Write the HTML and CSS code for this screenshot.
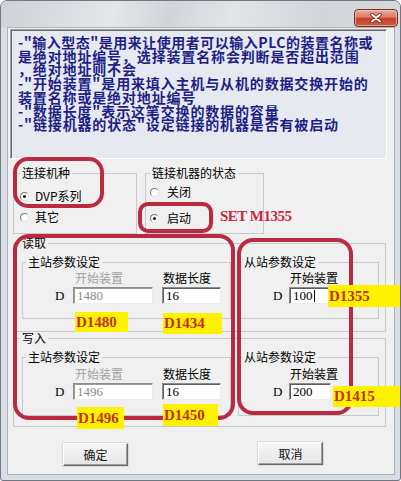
FILE: index.html
```html
<!DOCTYPE html>
<html lang="zh-CN">
<head>
<meta charset="utf-8">
<title>链接设定</title>
<link rel="stylesheet" href="styles.css">
</head>
<body>
<div class="window">
  <div class="titlebar">
    <div class="close">
      <svg width="12" height="10" viewBox="0 0 12 10"><path d="M2 1.5 L10 8.5 M10 1.5 L2 8.5" stroke="#5a1a12" stroke-width="3.4" stroke-linecap="round"/><path d="M2 1.5 L10 8.5 M10 1.5 L2 8.5" stroke="#fff" stroke-width="2" stroke-linecap="round"/></svg>
    </div>
  </div>
  <div class="client">
    <div class="notes">
      <div class="tight">-"输入型态"是用来让使用者可以输入PLC的装置名称或</div>
      <div>是绝对地址编号，选择装置名称会判断是否超出范围</div>
      <div>，绝对地址则不会</div>
      <div>-"开始装置"是用来填入主机与从机的数据交换开始的</div>
      <div>装置名称或是绝对地址编号</div>
      <div>-"数据长度"表示这笔交换的数据的容量</div>
      <div>-"链接机器的状态"设定链接的机器是否有被启动</div>
    </div>

    <div class="row-mid">
      <fieldset class="grp g-kind">
        <legend>连接机种</legend>
        <div class="radios">
          <div class="radio"><span class="rb on"></span><span>DVP系列</span></div>
          <div class="radio"><span class="rb"></span><span>其它</span></div>
        </div>
      </fieldset>
      <fieldset class="grp g-state">
        <legend>链接机器的状态</legend>
        <div class="radios">
          <div class="radio"><span class="rb"></span><span>关闭</span></div>
          <div class="radio"><span class="rb on"></span><span>启动</span></div>
        </div>
      </fieldset>
    </div>

    <fieldset class="grp g-io g-read">
      <legend>读取</legend>
      <div class="subs">
        <fieldset class="sub master">
          <legend>主站参数设定</legend>
          <div class="fields">
            <span class="dlabel">D</span>
            <div class="field f-start"><span class="flabel dis">开始装置</span><span class="input dis">1480</span></div>
            <div class="field f-len"><span class="flabel">数据长度</span><span class="input">16</span></div>
          </div>
        </fieldset>
        <fieldset class="sub slave">
          <legend>从站参数设定</legend>
          <div class="fields">
            <span class="dlabel">D</span>
            <div class="field f-slave"><span class="flabel">开始装置</span><span class="input">100<span class="caret"></span></span></div>
          </div>
        </fieldset>
      </div>
    </fieldset>

    <fieldset class="grp g-io g-write">
      <legend>写入</legend>
      <div class="subs">
        <fieldset class="sub master">
          <legend>主站参数设定</legend>
          <div class="fields">
            <span class="dlabel">D</span>
            <div class="field f-start"><span class="flabel dis">开始装置</span><span class="input dis">1496</span></div>
            <div class="field f-len"><span class="flabel">数据长度</span><span class="input">16</span></div>
          </div>
        </fieldset>
        <fieldset class="sub slave">
          <legend>从站参数设定</legend>
          <div class="fields">
            <span class="dlabel">D</span>
            <div class="field f-slave"><span class="flabel">开始装置</span><span class="input">200</span></div>
          </div>
        </fieldset>
      </div>
    </fieldset>

    <div class="buttons">
      <div class="btn ok">确定</div>
      <div class="btn cancel">取消</div>
    </div>
  </div>

  <!-- annotations drawn over the dialog -->
  <div class="mark m-kind"></div>
  <div class="mark m-on"></div>
  <div class="mark m-master"></div>
  <div class="mark m-slave"></div>
  <div class="set-note">SET M1355</div>
  <div class="tag t1">D1480</div>
  <div class="tag t2">D1434</div>
  <div class="tag t3">D1355</div>
  <div class="tag t4">D1496</div>
  <div class="tag t5">D1450</div>
  <div class="tag t6">D1415</div>
</div>
</body>
</html>
```

FILE: styles.css
```css
* { box-sizing: border-box; }
html, body { margin: 0; padding: 0; }
body {
  width: 401px;
  height: 481px;
  overflow: hidden;
  background: #ffffff;
  font-family: "Noto Sans CJK SC", "Liberation Sans", sans-serif;
  font-size: 12px;
  color: #000;
}

.window {
  position: relative;
  width: 401px;
  height: 481px;
  border: 1px solid #6f7883;
  border-radius: 7px 7px 3px 3px;
  background: #d9dee4;
  overflow: hidden;
}

.titlebar {
  height: 27px;
  display: flex;
  justify-content: flex-end;
  align-items: flex-start;
  background: linear-gradient(100deg, #cdd2d8 0%, #e4e6e9 28%, #d1d5da 42%, #e2e4e7 58%, #d2d6db 80%, #d6dade 100%);
}

.close {
  margin-top: 8px;
  margin-right: 2px;
  width: 44px;
  height: 18px;
  border: 1px solid #7b3026;
  border-radius: 4px;
  background: linear-gradient(#eaa898 0%, #dc7a65 45%, #c5432c 52%, #cc5a41 100%);
  box-shadow: inset 0 0 0 1px rgba(255, 220, 210, 0.55);
  display: flex;
  align-items: center;
  justify-content: center;
}
.close svg { display: block; }

.client {
  margin-left: 7px;
  width: 386px;
  height: 446px;
  background: #f0f0f0;
  box-shadow: 0 0 0 1px #a9b1bb;
  padding-top: 1px;
}

.notes {
  margin-left: 2px;
  width: 377px;
  height: 130px;
  border: 1px solid;
  border-color: #a0a0a0 #ffffff #ffffff #a0a0a0;
  box-shadow: inset 1px 1px 0 #6a6a6a;
  background: #e7e9f1;
  padding: 6px 0 0 7px;
  color: #1d1f86;
  font-size: 14px;
  font-weight: bold;
  line-height: 13.7px;
  letter-spacing: 0.85px;
  white-space: nowrap;
  overflow: hidden;
}
.notes .tight { letter-spacing: 0.5px; }

.row-mid {
  display: flex;
  gap: 8px;
  margin: 7px 0 0 5px;
}

fieldset { margin: 0; min-width: 0; }
legend {
  padding: 0 2px;
  font-size: 12px;
  line-height: 14px;
}

.grp {
  border: 1px solid #c6cacf;
}

.g-kind {
  width: 124px;
  height: 68px;
  padding: 9px 0 0 6px;
}
.g-state {
  width: 119px;
  height: 68px;
  padding: 5px 0 0 4px;
}
.radios { display: flex; flex-direction: column; }
.g-kind .radios { gap: 7px; }
.g-state .radios { gap: 12px; }
.radio {
  display: flex;
  align-items: center;
  height: 14px;
  line-height: 14px;
}
.g-kind .radio { gap: 6px; }
.g-state .radio { gap: 8px; }
.rb {
  width: 9px;
  height: 9px;
  border-radius: 50%;
  border: 1px solid;
  border-color: #7a7a7a #e4e4e4 #e4e4e4 #7a7a7a;
  background: #fbfbfb;
  display: flex;
  align-items: center;
  justify-content: center;
}
.rb.on::after {
  content: "";
  width: 3px;
  height: 3px;
  border-radius: 50%;
  background: #111;
}

.g-io {
  width: 373px;
  height: 96px;
  margin-left: 5px;
  padding: 5px 6px 0 8px;
}
.g-io > legend { margin-left: -2px; }
.g-read { margin-top: 2px; }
.g-write { margin-top: -1px; }

.subs { display: flex; gap: 7px; }

.sub {
  border: 1px solid #c6cacf;
  padding: 2px 0 0 3px;
  height: 64px;
}
.g-write .sub { height: 66px; padding-top: 3px; }
.master { width: 209px; }
.slave { width: 141px; }

.fields {
  display: flex;
  align-items: flex-end;
}
.dlabel {
  width: 8px;
  line-height: 17px;
  font-family: "Liberation Serif", serif;
  font-size: 13px;
}
.master .dlabel { margin-left: 29px; margin-right: 10px; }
.slave .dlabel { margin-left: 31px; margin-right: 8px; }

.field { display: flex; flex-direction: column; }
.f-start { width: 80px; margin-right: 9px; }
.f-len { width: 59px; }
.f-slave { width: 42px; }

.flabel {
  line-height: 14px;
  padding-left: 1px;
  white-space: nowrap;
}
.flabel.dis { color: #a3a3a3; padding-left: 2px; }
.input {
  margin-top: 2px;
  height: 17px;
  border: 1px solid;
  border-color: #8c8c8c #ececec #ececec #8c8c8c;
  box-shadow: inset 1px 1px 0 #5e5e5e;
  background: #ffffff;
  font-family: "Liberation Serif", serif;
  font-size: 13px;
  line-height: 15px;
  padding-left: 3px;
  display: flex;
  align-items: center;
}
.input.dis { color: #8a8a8a; box-shadow: inset 1px 1px 0 #9a9a9a; }
.caret {
  width: 1px;
  height: 12px;
  background: #000;
  margin-left: 1px;
}

.buttons {
  display: flex;
  gap: 130px;
  margin-top: 15px;
  padding-left: 55px;
}
.btn {
  width: 65px;
  height: 23px;
  border: 1px solid;
  border-color: #ffffff #6a6a6a #6a6a6a #ffffff;
  box-shadow: inset -1px -1px 0 #a0a0a0, 0 0 0 0.5px #c8c8c8;
  background: linear-gradient(#f6f6f6, #e6e6e6);
  display: flex;
  align-items: center;
  justify-content: center;
  font-size: 12px;
  color: #111;
}
.btn.ok { margin-top: 1px; }

/* annotations */
.mark {
  position: absolute;
  border: 4px solid #bb2a3f;
}
.m-kind { left: 12px; top: 156px; width: 91px; height: 51px; border-radius: 15px; }
.m-on { left: 137px; top: 201px; width: 75px; height: 31px; border-radius: 10px; }
.m-master { left: 12px; top: 233px; width: 222px; height: 186px; border-radius: 16px; }
.m-slave { left: 236px; top: 237px; width: 116px; height: 177px; border-radius: 16px; }

.set-note {
  position: absolute;
  left: 219px;
  top: 206px;
  font-family: "Liberation Serif", serif;
  font-weight: bold;
  font-size: 15px;
  letter-spacing: -0.5px;
  line-height: 18px;
  color: #c82a3d;
}

.tag {
  position: absolute;
  background: #fff200;
  color: #bd3118;
  font-family: "Liberation Serif", serif;
  font-weight: bold;
  font-size: 15px;
  line-height: 20px;
  padding-left: 1px;
}
.t1 { left: 74px; top: 311px; width: 53px; height: 20px; }
.t2 { left: 162px; top: 312px; width: 59px; height: 21px; padding-left: 1px; }
.t3 { left: 327px; top: 284px; width: 74px; height: 22px; line-height: 22px; }
.t4 { left: 76px; top: 406px; width: 47px; height: 22px; line-height: 22px; }
.t5 { left: 162px; top: 403px; width: 55px; height: 22px; line-height: 22px; }
.t6 { left: 332px; top: 385px; width: 69px; height: 21px; line-height: 21px; }
```
